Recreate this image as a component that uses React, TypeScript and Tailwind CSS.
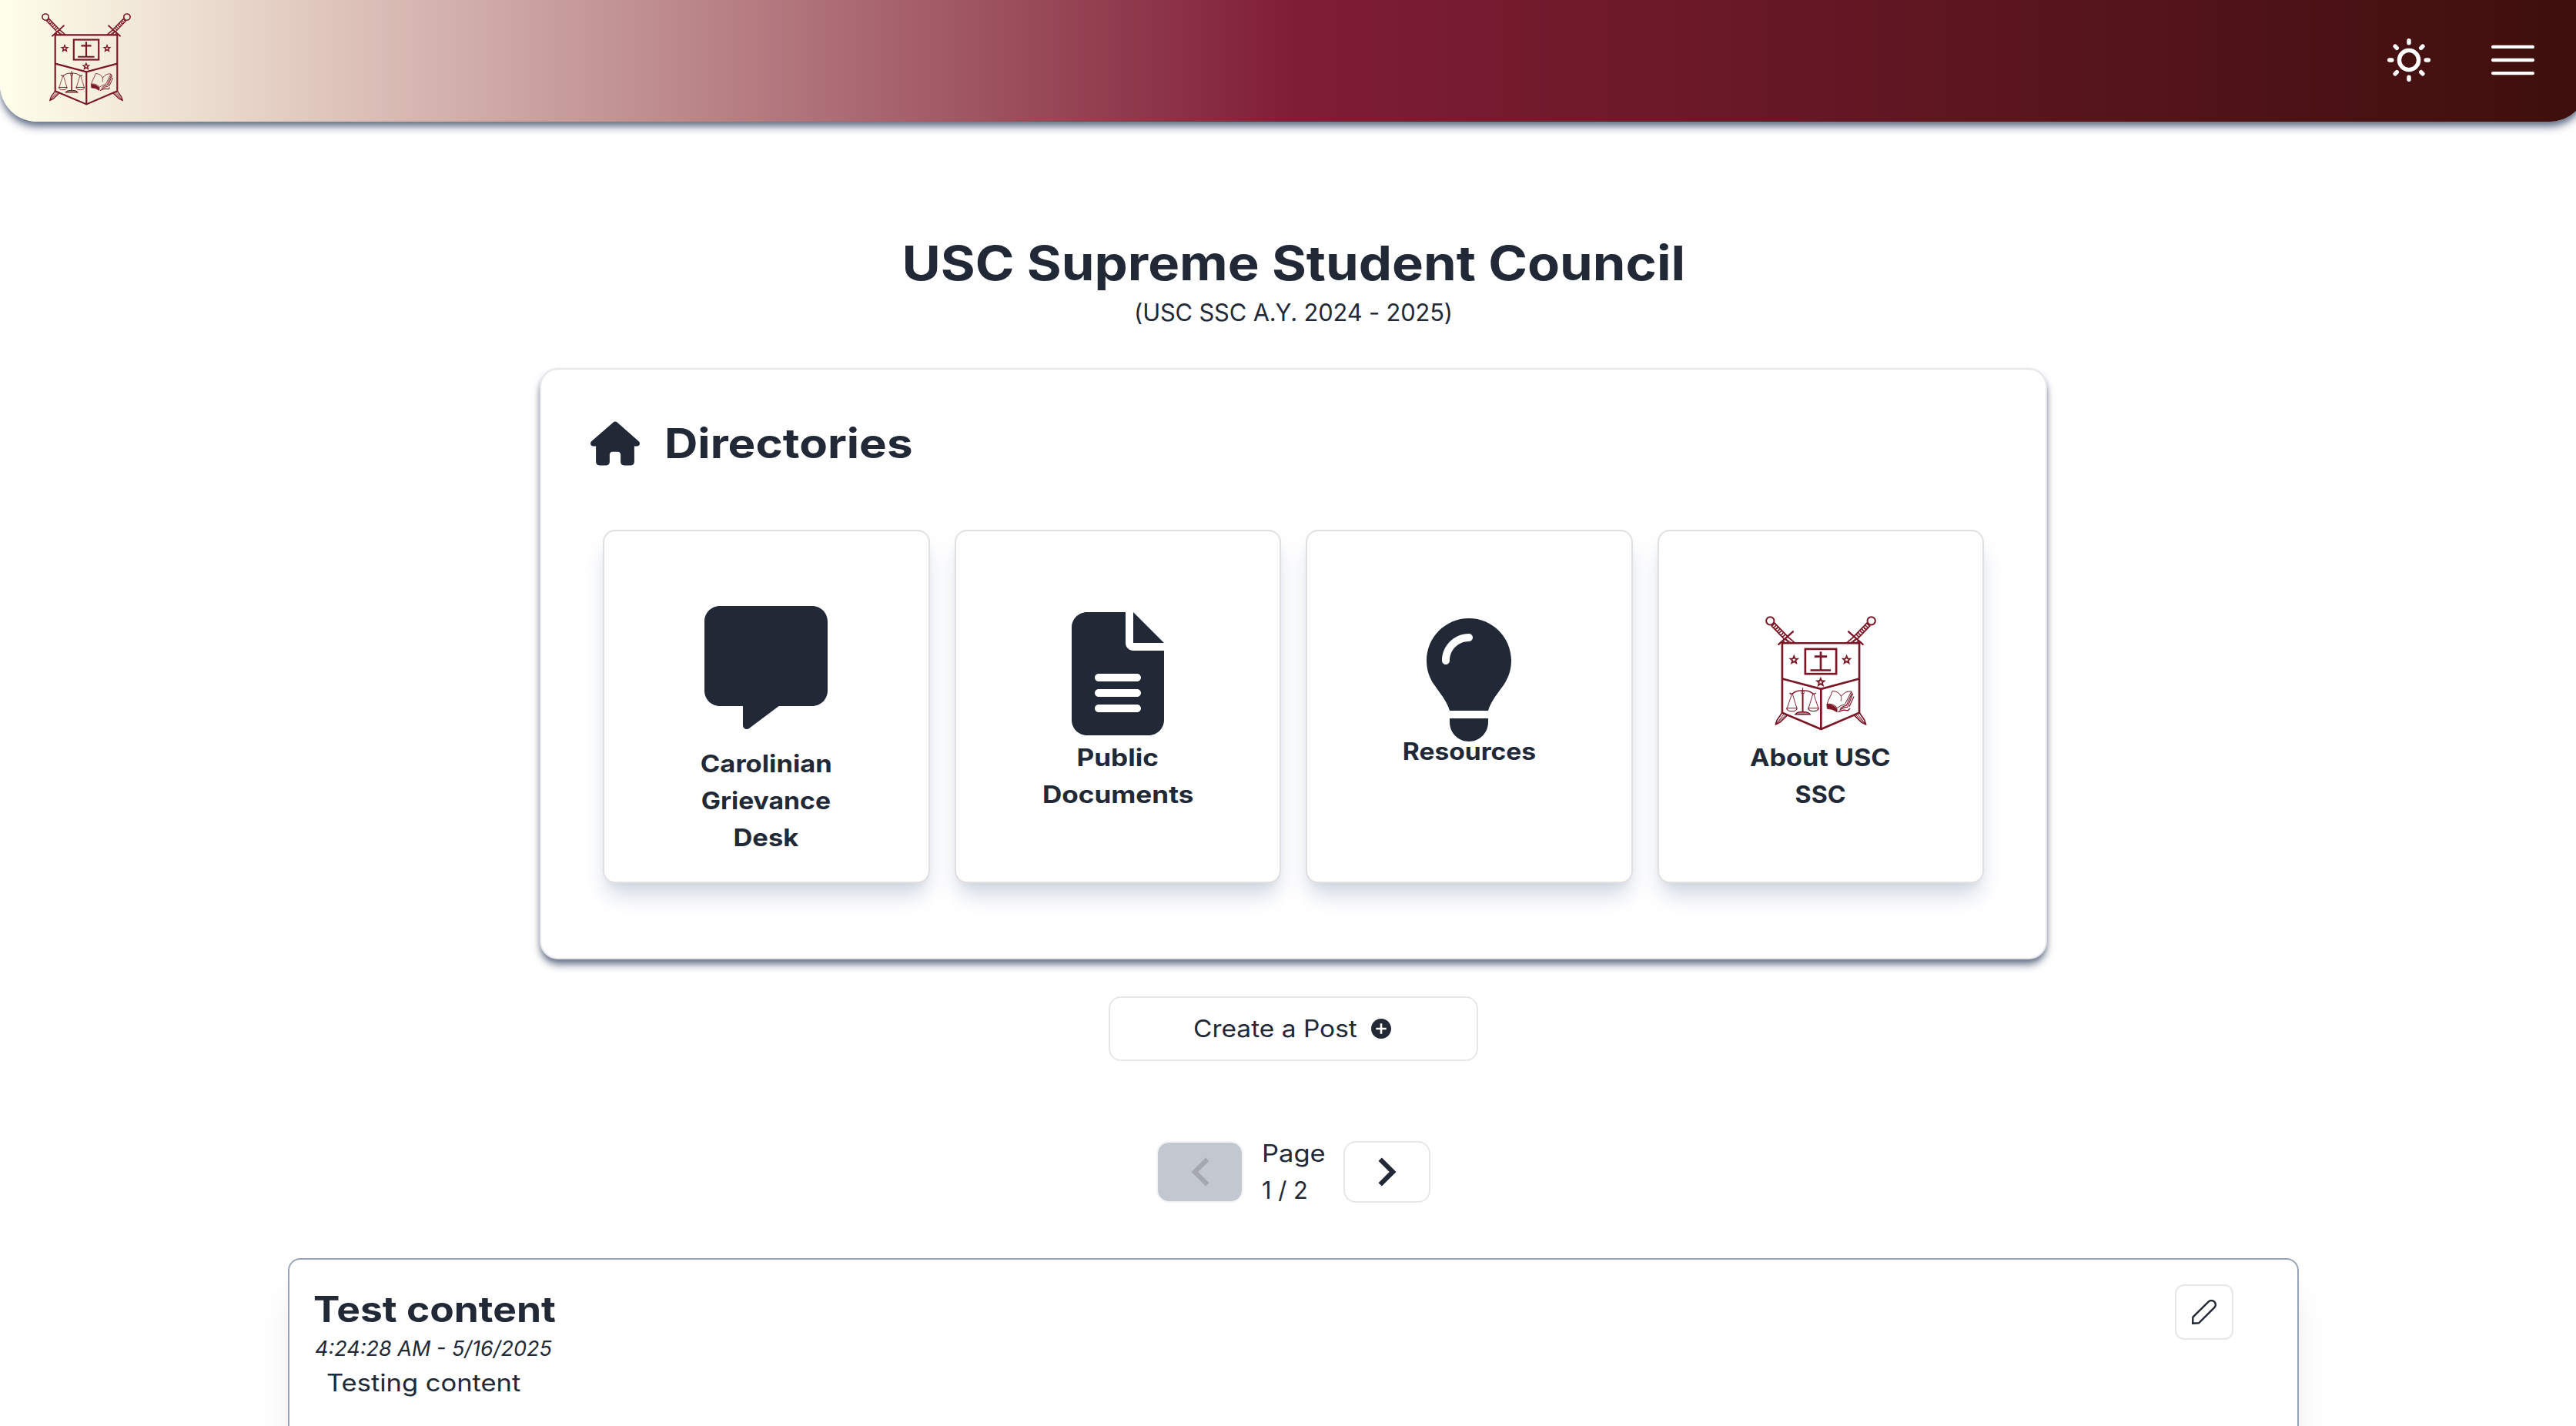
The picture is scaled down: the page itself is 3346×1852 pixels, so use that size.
import type { ReactNode } from "react";
import { FaFileLines, FaHouse, FaLightbulb, FaMessage } from "react-icons/fa6";
import { IoMdAddCircle } from "react-icons/io";

const STAR =
  "M0 -14 L3.8 -4.6 L13.8 -4 L6.2 2.5 L8.8 12.5 L0 7 L-8.8 12.5 L-6.2 2.5 L-13.8 -4 L-3.8 -4.6 Z";

function Sword() {
  return (
    <g>
      <circle cx="176" cy="107" r="15.5" strokeWidth="6" />
      <path d="M191 113 L247 171 M180 125 L230 177" strokeWidth="5" />
      <path
        d="M181 127 Q190 124 193 115 M188 134 Q197 131 200 122 M195 141 Q204 138 207 129 M202 148 Q211 145 214 136 M209 155 Q218 152 221 143 M216 163 Q225 160 228 151 M223 170 Q232 167 235 158"
        strokeWidth="5"
      />
      <path d="M209 199 L265 149" strokeWidth="7" strokeLinecap="round" />
      <path d="M243 168 L272 193 M233 177 L251 193 M226 186 L234 193" strokeWidth="5.500" />
      <path d="M238 178 L260 193" strokeWidth="3" />
    </g>
  );
}

function BladeTip() {
  return (
    <g>
      <path d="M222 467 L203 494 L197 512 L214 503 L244 475" strokeWidth="5" strokeLinejoin="round" />
      <path d="M230 471 L199 510 M237 474 L206 503" strokeWidth="3" />
    </g>
  );
}

function Crest({ className }: { className: string }) {
  return (
    <svg viewBox="158 88 431 448" className={className} fill="none" stroke="#7a1626" aria-hidden="true">
      <Sword />
      <g transform="matrix(-1 0 0 1 747 0)">
        <Sword />
      </g>
      <BladeTip />
      <g transform="matrix(-1 0 0 1 747 0)">
        <BladeTip />
      </g>
      <path d="M223 194 H524 V466 L374.500 530 L223 466 Z" strokeWidth="8" />
      <path d="M223 333 L374.500 373 L524 333 M374.500 373 V530" strokeWidth="8" />
      <rect x="313" y="217" width="121" height="97" strokeWidth="8" />
      <path d="M373.500 227 V300 M349 246 H398 M333 300 H413" strokeWidth="8" />
      <path d={STAR} transform="translate(269 259)" strokeWidth="5.500" />
      <path d={STAR} transform="translate(474.500 259)" strokeWidth="5.500" />
      <path d={STAR} transform="translate(373 346)" strokeWidth="5.500" />
      <g>
        <path d="M303 368 V392" strokeWidth="3" />
        <path d="M303 390 V463" strokeWidth="6" />
        <path d="M298 380 h10 v10 h-10 z" strokeWidth="2.500" />
        <path
          d="M252 388 Q257 396 266 389 Q282 377 303 380 Q324 377 340 389 Q349 396 354 388"
          strokeWidth="4"
        />
        <path d="M261 392 L242 448 M263 392 L280 448 M343 392 L326 448 M346 392 L364 448" strokeWidth="2.800" />
        <path
          d="M240 448 H281 Q279 460 261 460 Q242 460 240 448 Z M324 448 H366 Q363 460 345 460 Q327 460 324 448 Z"
          strokeWidth="3.500"
        />
        <path d="M274 472 Q280 464 291 463 H315 Q326 464 332 472 Z" strokeWidth="4" fill="#7a1626" fillOpacity="0.500" />
      </g>
      <g strokeLinejoin="round">
        <path
          d="M419 381 Q444 382 453 402 Q470 379 493 383 L468 433 Q448 437 439 447 Q420 428 398 432 Q401 424 403 418 Q414 396 419 381"
          strokeWidth="3"
        />
        <path d="M453 402 Q456 412 452 421" strokeWidth="2.500" />
        <path d="M493 383 L495 390 L474 437 Q458 440 449 450" strokeWidth="3.500" />
        <path d="M499 391 L478 444 Q462 444 447 456 M503 402 L485 442" strokeWidth="3.500" />
        <path d="M397 433 Q420 432 437 450 V463 Q420 450 399 450 Z" fill="#7a1626" strokeWidth="2.500" />
        <path d="M441 463 L462 455 L480 457 L488 449" strokeWidth="4" />
      </g>
    </svg>
  );
}

function SunIcon() {
  return (
    <svg viewBox="-28 -28 56 56" className="size-14" fill="none" stroke="white" strokeWidth="5.4" strokeLinecap="round">
      <circle r="12.600" />
      {[0, 45, 90, 135, 180, 225, 270, 315].map((angle) => (
        <path key={angle} d="M0 -25.300 V-22.200" transform={`rotate(${angle})`} />
      ))}
    </svg>
  );
}

function MenuIcon() {
  return (
    <svg viewBox="0 0 56 56" className="size-14" stroke="white" strokeWidth="4.4" strokeLinecap="round">
      <path d="M2.200 10.900 H53.800 M2.200 28 H53.800 M2.200 45.100 H53.800" />
    </svg>
  );
}

function Chevron({ flipped = false }: { flipped?: boolean }) {
  return (
    <svg
      viewBox="0 0 24 38"
      className={flipped ? "h-[38px] w-6 -scale-x-100" : "h-[38px] w-6"}
      fill="none"
      stroke="currentColor"
      strokeWidth="6.200"
    >
      <path d="M2.700 2.600 L19.100 19 L2.700 35.400" />
    </svg>
  );
}

function PencilIcon() {
  return (
    <svg viewBox="0 0 32 32" className="size-8" fill="none" stroke="currentColor" strokeWidth="2.400">
      <path d="M1.200 30.800 L1.400 22.600 L21.600 2.600 A5.300 5.300 0 0 1 29.300 10.200 L9 30.300 Z" />
    </svg>
  );
}

type Tile = { lines: { text: string; stretch: string }[]; icon: ReactNode; frame: string };

const tiles: Tile[] = [
  {
    lines: [
      { text: "Carolinian", stretch: "scale-x-[1.12]" },
      { text: "Grievance", stretch: "scale-x-[1.095]" },
      { text: "Desk", stretch: "scale-x-[1.12]" },
    ],
    icon: <FaMessage className="size-40" />,
    frame: "gap-[21px] pt-[97px]",
  },
  {
    lines: [
      { text: "Public", stretch: "scale-x-[1.14]" },
      { text: "Documents", stretch: "scale-x-[1.14]" },
    ],
    icon: <FaFileLines className="size-40" />,
    frame: "gap-[5px] pt-[105px]",
  },
  {
    lines: [{ text: "Resources", stretch: "scale-x-[1.09] -mt-[11px]" }],
    icon: <FaLightbulb className="size-40 shrink-0" />,
    frame: "pt-[113px]",
  },
  {
    lines: [
      { text: "About USC", stretch: "scale-x-[1.11]" },
      { text: "SSC", stretch: "scale-x-[1.045]" },
    ],
    icon: <Crest className="h-[149px] w-[144px]" />,
    frame: "gap-[11px] pt-[110px]",
  },
];

function DirectoryTile({ lines, icon, frame }: Tile) {
  return (
    <a
      className={`flex h-[459px] flex-1 flex-col items-center rounded-2xl border-2 border-[#e0e0e0] bg-white shadow-[0_20px_30px_-6px_#cdd5e0,0_8px_12px_-8px_#cdd5e0] ${frame}`}
    >
      {icon}
      <span className="flex flex-col items-center text-[30.8px] leading-[48px] font-bold">
        {lines.map((line) => (
          <span key={line.text} className={line.stretch}>
            {line.text}
          </span>
        ))}
      </span>
    </a>
  );
}

export default function App() {
  return (
    <div className="h-[1852px] w-[3346px] overflow-hidden bg-white font-['Inter',sans-serif] text-[30.8px] leading-[48px] text-[#212936]">
      <div className="flex w-[3360px] flex-col items-center">
        <header className="flex h-[158px] w-full items-center justify-between rounded-b-[48px] bg-[linear-gradient(90deg,#ffffeb_0%,#7f1d35_50%,#3d0f0c_100%)] pr-[68px] pb-0.5 pl-[54px] shadow-[0_8px_12px_-2px_#67748a,0_4px_8px_-4px_#67748a]">
          <Crest className="mb-0.5 h-[120px] w-[116px]" />
          <div className="flex items-center gap-[79px]">
            <SunIcon />
            <MenuIcon />
          </div>
        </header>

        <h1 className="mt-36 scale-x-[1.115] text-[61.6px] leading-[80px] font-bold">USC Supreme Student Council</h1>
        <p className="tracking-[-0.12px]">(USC SSC A.Y. 2024 - 2025)</p>

        <section className="mt-12 flex h-[768px] w-[1958px] flex-col rounded-3xl border-2 border-[#e6e7eb] bg-white px-16 pt-14 shadow-[0_8px_12px_-2px_#67748a,0_4px_8px_-4px_#67748a]">
          <div className="flex items-center gap-8">
            <FaHouse className="size-16" />
            <h2 className="origin-left scale-x-[1.112] text-[54px] leading-[80px] font-bold">Directories</h2>
          </div>
          <div className="mx-4 mt-[72px] flex gap-8">
            {tiles.map((tile) => (
              <DirectoryTile key={tile.lines[0].text} {...tile} />
            ))}
          </div>
        </section>

        <button className="mt-12 flex h-[84px] w-[480px] items-center justify-center gap-[15px] rounded-2xl border-2 border-[#e6e7eb] bg-white">
          <span className="w-[213px] origin-left scale-x-[1.087] text-left whitespace-nowrap">Create a Post</span>
          <IoMdAddCircle className="size-8" />
        </button>

        <nav className="mt-[96px] flex items-center">
          <button
            disabled
            className="flex h-20 w-[113px] items-center justify-center rounded-2xl border-2 border-[#f2f3f5] bg-[#c3c7d0] bg-clip-padding text-[#a5a8af]"
          >
            <Chevron flipped />
          </button>
          <div className="flex w-[130px] flex-col items-start pl-6">
            <span className="origin-left scale-x-[1.12]">Page</span>
            <span>1 / 2</span>
          </div>
          <button className="flex h-20 w-[113px] items-center justify-center rounded-2xl border-2 border-[#e6e7eb] bg-white">
            <Chevron />
          </button>
        </nav>

        <article className="mt-16 flex h-[400px] w-[2612px] justify-between rounded-2xl border-2 border-[#97a3b6] bg-white pt-8 pr-[83px] pl-8 shadow-[0_40px_50px_-10px_rgba(0,0,0,0.1),0_16px_20px_-12px_rgba(0,0,0,0.1)]">
          <div className="flex flex-col items-start">
            <h3 className="-ml-px origin-left scale-x-[1.115] text-[46.2px] leading-[64px] font-bold">Test content</h3>
            <span className="pl-px text-[27px] leading-10 italic">4:24:28 AM - 5/16/2025</span>
            <p className="ml-4 origin-left scale-x-[1.12]">Testing content</p>
          </div>
          <button className="flex h-[72px] w-[76px] items-center justify-center rounded-xl border-2 border-[#e6e7eb] bg-white">
            <PencilIcon />
          </button>
        </article>
      </div>
    </div>
  );
}
